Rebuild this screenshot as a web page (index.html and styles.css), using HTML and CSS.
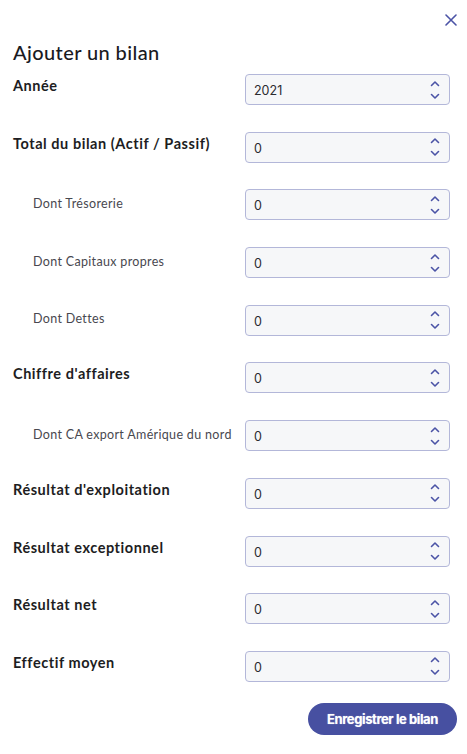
FILE: index.html
```html
<!DOCTYPE html>
<html lang="fr">
<head>
<meta charset="utf-8">
<title>Ajouter un bilan</title>
<link rel="stylesheet" href="styles.css">
</head>
<body>
<div class="modal">
  <div class="topbar">
    <button class="close" aria-label="Fermer">
      <svg width="12" height="12" viewBox="0 0 12 12"><path d="M1 1L11 11M11 1L1 11" stroke="#4b53a6" stroke-width="1.6" stroke-linecap="round"/></svg>
    </button>
  </div>
  <h1 class="title">Ajouter un bilan</h1>
  <div class="form">
    <div class="row"><label class="lbl main">Année</label><div class="field"><span class="val">2021</span><span class="spin"><svg width="10" height="22" viewBox="0 0 10 22"><path d="M1.5 6.5L5 3L8.5 6.5M1.5 15.5L5 19L8.5 15.5" fill="none" stroke="#4b53a6" stroke-width="1.6" stroke-linecap="round" stroke-linejoin="round"/></svg></span></div></div>
    <div class="row"><label class="lbl main">Total du bilan (Actif / Passif)</label><div class="field"><span class="val">0</span><span class="spin"><svg width="10" height="22" viewBox="0 0 10 22"><path d="M1.5 6.5L5 3L8.5 6.5M1.5 15.5L5 19L8.5 15.5" fill="none" stroke="#4b53a6" stroke-width="1.6" stroke-linecap="round" stroke-linejoin="round"/></svg></span></div></div>
    <div class="row"><label class="lbl sub">Dont Trésorerie</label><div class="field"><span class="val">0</span><span class="spin"><svg width="10" height="22" viewBox="0 0 10 22"><path d="M1.5 6.5L5 3L8.5 6.5M1.5 15.5L5 19L8.5 15.5" fill="none" stroke="#4b53a6" stroke-width="1.6" stroke-linecap="round" stroke-linejoin="round"/></svg></span></div></div>
    <div class="row"><label class="lbl sub">Dont Capitaux propres</label><div class="field"><span class="val">0</span><span class="spin"><svg width="10" height="22" viewBox="0 0 10 22"><path d="M1.5 6.5L5 3L8.5 6.5M1.5 15.5L5 19L8.5 15.5" fill="none" stroke="#4b53a6" stroke-width="1.6" stroke-linecap="round" stroke-linejoin="round"/></svg></span></div></div>
    <div class="row"><label class="lbl sub">Dont Dettes</label><div class="field"><span class="val">0</span><span class="spin"><svg width="10" height="22" viewBox="0 0 10 22"><path d="M1.5 6.5L5 3L8.5 6.5M1.5 15.5L5 19L8.5 15.5" fill="none" stroke="#4b53a6" stroke-width="1.6" stroke-linecap="round" stroke-linejoin="round"/></svg></span></div></div>
    <div class="row"><label class="lbl main">Chiffre d'affaires</label><div class="field"><span class="val">0</span><span class="spin"><svg width="10" height="22" viewBox="0 0 10 22"><path d="M1.5 6.5L5 3L8.5 6.5M1.5 15.5L5 19L8.5 15.5" fill="none" stroke="#4b53a6" stroke-width="1.6" stroke-linecap="round" stroke-linejoin="round"/></svg></span></div></div>
    <div class="row"><label class="lbl sub">Dont CA export Amérique du nord</label><div class="field"><span class="val">0</span><span class="spin"><svg width="10" height="22" viewBox="0 0 10 22"><path d="M1.5 6.5L5 3L8.5 6.5M1.5 15.5L5 19L8.5 15.5" fill="none" stroke="#4b53a6" stroke-width="1.6" stroke-linecap="round" stroke-linejoin="round"/></svg></span></div></div>
    <div class="row"><label class="lbl main">Résultat d'exploitation</label><div class="field"><span class="val">0</span><span class="spin"><svg width="10" height="22" viewBox="0 0 10 22"><path d="M1.5 6.5L5 3L8.5 6.5M1.5 15.5L5 19L8.5 15.5" fill="none" stroke="#4b53a6" stroke-width="1.6" stroke-linecap="round" stroke-linejoin="round"/></svg></span></div></div>
    <div class="row"><label class="lbl main">Résultat exceptionnel</label><div class="field"><span class="val">0</span><span class="spin"><svg width="10" height="22" viewBox="0 0 10 22"><path d="M1.5 6.5L5 3L8.5 6.5M1.5 15.5L5 19L8.5 15.5" fill="none" stroke="#4b53a6" stroke-width="1.6" stroke-linecap="round" stroke-linejoin="round"/></svg></span></div></div>
    <div class="row"><label class="lbl main">Résultat net</label><div class="field"><span class="val">0</span><span class="spin"><svg width="10" height="22" viewBox="0 0 10 22"><path d="M1.5 6.5L5 3L8.5 6.5M1.5 15.5L5 19L8.5 15.5" fill="none" stroke="#4b53a6" stroke-width="1.6" stroke-linecap="round" stroke-linejoin="round"/></svg></span></div></div>
    <div class="row"><label class="lbl main">Effectif moyen</label><div class="field"><span class="val">0</span><span class="spin"><svg width="10" height="22" viewBox="0 0 10 22"><path d="M1.5 6.5L5 3L8.5 6.5M1.5 15.5L5 19L8.5 15.5" fill="none" stroke="#4b53a6" stroke-width="1.6" stroke-linecap="round" stroke-linejoin="round"/></svg></span></div></div>
  </div>
  <div class="actions">
    <button class="save">Enregistrer le bilan</button>
  </div>
</div>
</body>
</html>
```
FILE: styles.css
```css
* { box-sizing: border-box; }
html, body { margin: 0; padding: 0; background: #fff; }
body { font-family: Lato, "Noto Sans", sans-serif; color: #1f1f24; }
.modal { width: 467px; height: 754px; padding: 14px 10px 0 13px; }
.topbar { display: flex; justify-content: flex-end; height: 14px; }
.close { border: 0; background: none; padding: 0; width: 12px; height: 12px; cursor: pointer; display: flex; }
.title { margin: 12px 0 10px 0; font-size: 20px; font-weight: 500; line-height: 24px; color: #1a1a1f; letter-spacing: 0.4px; }
.form { display: flex; flex-direction: column; gap: 26.7px; }
.row { display: grid; grid-template-columns: 232px 205px; height: 31px; }
.lbl { display: block; }
.lbl.main { font-size: 14.5px; font-weight: 700; line-height: 18px; padding-top: 3px; color: #1d1d22; letter-spacing: 0.55px; }
.lbl.sub { font-size: 12.5px; font-weight: 400; line-height: 16px; align-self: center; padding-left: 20px; padding-bottom: 2px; color: #48484f; letter-spacing: 0.33px; }
.field { display: flex; align-items: center; justify-content: space-between; height: 31px; border: 1px solid #b3b7d9; border-radius: 4px; background: #f6f7f9; padding: 0 9px 0 8px; }
.val { font-family: Inter, "Liberation Sans", sans-serif; font-size: 12.5px; color: #2b2b30; padding-top: 2px; }
.spin { display: flex; }
.actions { display: flex; justify-content: flex-end; margin-top: 21px; }
.save { width: 149px; height: 32px; border: 0; border-radius: 16px; background: #4750a1; color: #fff; font-family: Inter, "Liberation Sans", sans-serif; font-weight: 700; font-size: 13px; letter-spacing: -0.4px; text-shadow: 0 0 1px rgba(255,255,255,0.6); cursor: pointer; }
```
